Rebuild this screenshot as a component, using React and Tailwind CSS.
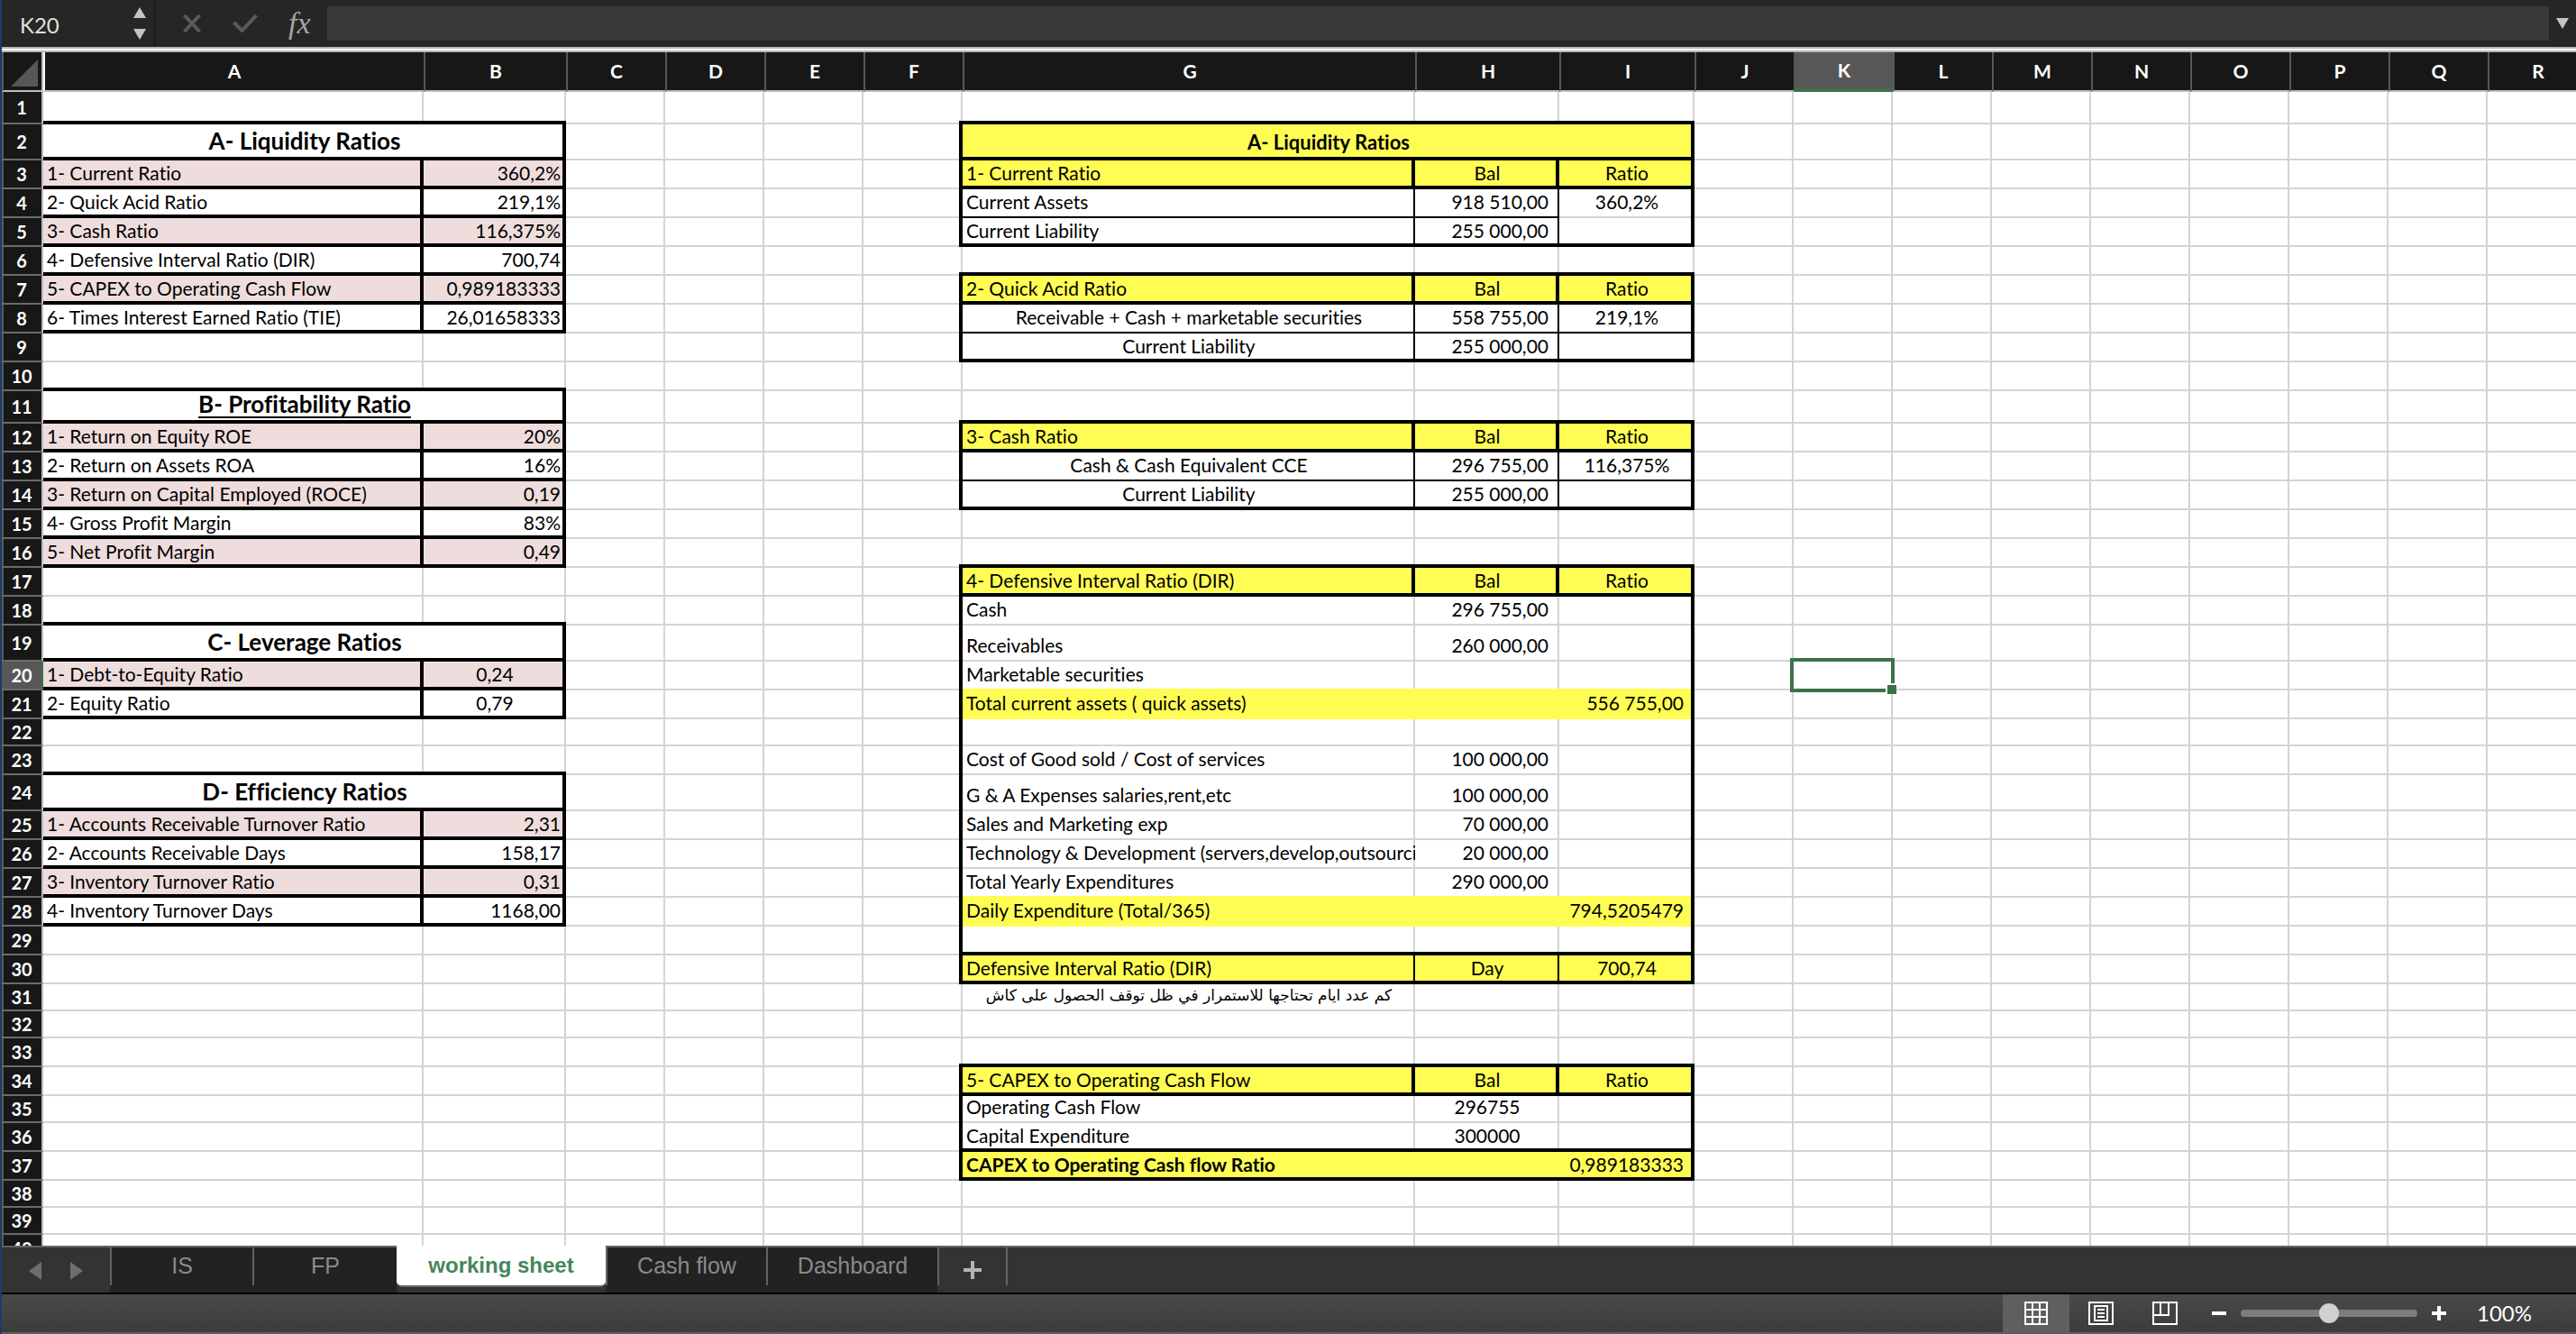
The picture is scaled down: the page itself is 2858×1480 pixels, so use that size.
import React, { useState } from "react";
import clsx from "clsx";

const columns = [
  { id: "A", width: "w-[422px]" },
  { id: "B", width: "w-[158px]" },
  { id: "C", width: "w-[110px]" },
  { id: "D", width: "w-[110px]" },
  { id: "E", width: "w-[110px]" },
  { id: "F", width: "w-[110px]" },
  { id: "G", width: "w-[502px]" },
  { id: "H", width: "w-[160px]" },
  { id: "I", width: "w-[150px]" },
  { id: "J", width: "w-[110px]" },
  { id: "K", width: "w-[110px]" },
  { id: "L", width: "w-[110px]" },
  { id: "M", width: "w-[110px]" },
  { id: "N", width: "w-[110px]" },
  { id: "O", width: "w-[110px]" },
  { id: "P", width: "w-[110px]" },
  { id: "Q", width: "w-[110px]" },
  { id: "R", width: "w-auto" },
];

// cell text, row by row
const cells = {
  A2: "A- Liquidity Ratios",
  A3: "1- Current Ratio",
  B3: "360,2%",
  A4: "2- Quick Acid Ratio",
  B4: "219,1%",
  A5: "3- Cash Ratio",
  B5: "116,375%",
  A6: "4- Defensive Interval Ratio (DIR)",
  B6: "700,74",
  A7: "5- CAPEX to Operating Cash Flow",
  B7: "0,989183333",
  A8: "6- Times Interest Earned Ratio (TIE)",
  B8: "26,01658333",
  A11: "B- Profitability Ratio",
  A12: "1- Return on Equity ROE",
  B12: "20%",
  A13: "2- Return on Assets ROA",
  B13: "16%",
  A14: "3- Return on Capital Employed (ROCE)",
  B14: "0,19",
  A15: "4- Gross Profit Margin",
  B15: "83%",
  A16: "5- Net Profit Margin",
  B16: "0,49",
  A19: "C- Leverage Ratios",
  A20: "1- Debt-to-Equity Ratio",
  B20: "0,24",
  A21: "2- Equity Ratio",
  B21: "0,79",
  A24: "D- Efficiency Ratios",
  A25: "1- Accounts Receivable Turnover Ratio",
  B25: "2,31",
  A26: "2- Accounts Receivable Days",
  B26: "158,17",
  A27: "3- Inventory Turnover Ratio",
  B27: "0,31",
  A28: "4- Inventory Turnover Days",
  B28: "1168,00",

  G2: "A- Liquidity Ratios",
  G3: "1- Current Ratio",
  H3: "Bal",
  I3: "Ratio",
  G4: "Current Assets",
  H4: "918 510,00",
  I4: "360,2%",
  G5: "Current Liability",
  H5: "255 000,00",
  G7: "2- Quick Acid Ratio",
  H7: "Bal",
  I7: "Ratio",
  G8: "Receivable + Cash + marketable securities",
  H8: "558 755,00",
  I8: "219,1%",
  G9: "Current Liability",
  H9: "255 000,00",
  G12: "3- Cash Ratio",
  H12: "Bal",
  I12: "Ratio",
  G13: "Cash & Cash Equivalent CCE",
  H13: "296 755,00",
  I13: "116,375%",
  G14: "Current Liability",
  H14: "255 000,00",
  G17: "4- Defensive Interval Ratio (DIR)",
  H17: "Bal",
  I17: "Ratio",
  G18: "Cash",
  H18: "296 755,00",
  G19: "Receivables",
  H19: "260 000,00",
  G20: "Marketable securities",
  G21: "Total current assets ( quick assets)",
  I21: "556 755,00",
  G23: "Cost of Good sold / Cost of services",
  H23: "100 000,00",
  G24: "G & A Expenses salaries,rent,etc",
  H24: "100 000,00",
  G25: "Sales and Marketing exp",
  H25: "70 000,00",
  G26: "Technology & Development (servers,develop,outsourcing)",
  H26: "20 000,00",
  G27: "Total Yearly Expenditures",
  H27: "290 000,00",
  G28: "Daily Expenditure (Total/365)",
  I28: "794,5205479",
  G30: "Defensive Interval Ratio (DIR)",
  H30: "Day",
  I30: "700,74",
  G31: "كم عدد ايام تحتاجها للاستمرار في ظل توقف الحصول على كاش",
  G34: "5- CAPEX to Operating Cash Flow",
  H34: "Bal",
  I34: "Ratio",
  G35: "Operating Cash Flow",
  H35: "296755",
  G36: "Capital Expenditure",
  H36: "300000",
  G37: "CAPEX to Operating Cash flow Ratio",
  I37: "0,989183333",
};

const rowNumbers = Array.from({ length: 40 }, (_, i) => i + 1);
const shortRows = [22, 31, 32, 35, 38, 39];
const pinkRows = [3, 5, 7, 12, 14, 16, 20, 25, 27];
const yellowRows = [2, 3, 7, 12, 17, 21, 28, 30, 34, 37];
const sectionRows = [3, 7, 12, 17, 34];
const titleRows = [2, 11, 19, 24];
// rows right above a boxed block in column G
const cornerRows = [1, 6, 11, 16, 33];

// key is right edge + bottom edge: g grid, t thin, k thick, y yellow, n none
const edges = {
  gg: "shadow-[inset_-2px_0_#d4d4d4,inset_0_-2px_#d4d4d4]",
  gk: "shadow-[inset_0_-4px_#000,inset_-2px_0_#d4d4d4]",
  gy: "shadow-[inset_0_-2px_#fffd54,inset_-2px_0_#d4d4d4]",
  kg: "shadow-[inset_-4px_0_#000,inset_0_-2px_#d4d4d4]",
  ky: "shadow-[inset_-4px_0_#000,inset_0_-2px_#fffd54]",
  kt: "shadow-[inset_-4px_0_#000,inset_0_-2px_#000]",
  kk: "shadow-[inset_-4px_0_#000,inset_0_-4px_#000]",
  kn: "shadow-[inset_-4px_0_#000]",
  tg: "shadow-[inset_-2px_0_#000,inset_0_-2px_#d4d4d4]",
  tt: "shadow-[inset_-2px_0_#000,inset_0_-2px_#000]",
  tk: "shadow-[inset_-2px_0_#000,inset_0_-4px_#000]",
  nk: "shadow-[inset_0_-4px_#000]",
  nn: "",
};

const between = (n, ranges) => ranges.some(([a, b]) => n >= a && n <= b);
const inLeftTable = (row) => between(row, [[2, 8], [11, 16], [19, 21], [24, 28]]);
const inRightTable = (row) =>
  between(row, [[2, 5], [7, 9], [12, 14], [17, 30], [34, 37]]);

function rightEdge(col, row) {
  if ("AB".includes(col)) return inLeftTable(row) ? "k" : "g";
  if ("FI".includes(col)) return inRightTable(row) ? "k" : "g";
  if ("GH".includes(col)) {
    if (row === 2 || sectionRows.includes(row)) return "k";
    if ([4, 5, 8, 9, 13, 14, 30].includes(row)) return "t";
    if ([21, 28, 37].includes(row)) return "n";
  }
  return "g";
}

function bottomEdge(col, row) {
  if ("AB".includes(col)) {
    return inLeftTable(row) || [1, 10, 18, 23].includes(row) ? "k" : "g";
  }
  if ("GHI".includes(col)) {
    if (
      [1, 2, 3, 5, 6, 7, 9, 11, 12, 14, 16, 17, 29, 30, 33, 34, 36, 37].includes(row)
    )
      return "k";
    if ([8, 13].includes(row) || (row === 4 && col !== "I")) return "t";
    if ([20, 27].includes(row)) return "y";
    if ([21, 28].includes(row)) return "n";
  }
  return "g";
}

function cellAlign(col, row) {
  if (col === "A") return titleRows.includes(row) ? "text-center" : "pl-1";
  if (col === "B") return [20, 21].includes(row) ? "text-center" : "pr-1.5 text-right";
  if (col === "G")
    return [2, 8, 9, 13, 14, 31].includes(row) ? "text-center" : "pl-1";
  if (col === "H")
    return sectionRows.includes(row) || [30, 35, 36].includes(row)
      ? "text-center"
      : "pr-3 text-right";
  if (col === "I") return [21, 28, 37].includes(row) ? "pr-3 text-right" : "text-center";
  return "";
}

function rowHeight(row) {
  if ([2, 19, 24].includes(row)) return "h-10";
  if ([1, 11].includes(row)) return "h-9";
  if (shortRows.includes(row)) return "h-[30px]";
  return "h-8";
}

const Cell = ({ col, row }) => {
  const leftTitle = col === "A" && titleRows.includes(row);
  const rightTitle = col === "G" && row === 2;
  const arabic = col === "G" && row === 31;
  const selected = col === "K" && row === 20;
  const corner = col === "F" && cornerRows.includes(row);

  return (
    <td
      colSpan={leftTitle ? 2 : rightTitle ? 3 : undefined}
      dir={arabic ? "rtl" : undefined}
      className={clsx(
        "align-bottom whitespace-nowrap",
        selected || corner ? "relative" : "overflow-hidden",
        leftTitle || rightTitle ? "pb-2.5" : "pb-2",
        leftTitle ? "text-[26px] leading-6 font-bold" : "leading-5",
        rightTitle && "text-[22px] font-bold",
        col === "G" && row === 37 && "font-bold",
        col === "A" && row === 11 && "underline underline-offset-4",
        arabic && "font-['DejaVu_Sans',sans-serif] text-[17px]",
        cellAlign(col, row),
        "AB".includes(col) && pinkRows.includes(row) && "bg-[#eedddc]",
        "GHI".includes(col) && yellowRows.includes(row) && "bg-[#fffd54]",
        edges[rightEdge(col, row) + bottomEdge(col, row)]
      )}
    >
      {cells[col + row]}
      {corner && <span className="absolute right-0 bottom-0 h-1 w-1 bg-black"></span>}
      {selected && (
        <div className="absolute -top-1 -left-1 -right-0.5 -bottom-0.5 border-4 border-[#3c724a]">
          <span className="absolute -right-1.5 -bottom-1.5 h-3 w-3 border-t-2 border-l-2 border-white bg-[#3c724a]"></span>
        </div>
      )}
    </td>
  );
};

const Sheet = () => {
  return (
    <table className="w-[calc(100%+12px)] table-fixed border-separate border-spacing-0 bg-white text-[21px] text-black">
      <colgroup>
        <col className="w-[46px]" />
        {columns.map((c) => (
          <col key={c.id} className={c.width} />
        ))}
      </colgroup>
      <thead>
        <tr className="h-11 bg-[#171717] text-white">
          <td className="border-r-2 border-b-2 border-l-2 border-[#bdbdbd] border-l-[#55585c] p-0">
            <svg viewBox="0 0 42 42" className="h-[42px] w-[42px]">
              <path d="M8 38 L38 8 V38 Z" fill="#575757" />
            </svg>
          </td>
          {columns.map((c) => (
            <th
              key={c.id}
              scope="col"
              className={clsx(
                "border-l-2 p-0 font-bold",
                c.id === "K"
                  ? "border-b-4 border-b-[#3c724a] bg-[#575757]"
                  : "border-b-2 border-b-[#bdbdbd]",
                c.id === "A" ? "border-l-white" : "border-l-[#575757]"
              )}
            >
              {c.id}
            </th>
          ))}
        </tr>
      </thead>
      <tbody>
        {rowNumbers.map((row) => (
          <tr key={row} className={rowHeight(row)}>
            <th
              scope="row"
              className={clsx(
                "border-r-2 border-b-2 border-b-[#6a6a6a] p-0 text-[20px] leading-5 font-bold text-white shadow-[inset_2px_0_#55585c]",
                row === 20
                  ? "border-r-[#3c724a] bg-[#575757]"
                  : "border-r-[#bdbdbd] bg-[#171717]"
              )}
            >
              {row}
            </th>
            {columns
              .filter((c) => !(c.id === "B" && titleRows.includes(row)))
              .filter((c) => !(row === 2 && "HI".includes(c.id)))
              .map((c) => (
                <Cell key={c.id} col={c.id} row={row} />
              ))}
          </tr>
        ))}
      </tbody>
    </table>
  );
};

const FormulaBar = () => {
  const [formula, setFormula] = useState("");
  return (
    <div className="flex h-[52px] shrink-0 items-center bg-[#262626]">
      <div className="flex h-full w-[172px] items-center justify-between border-r-4 border-[#1f1f1f] pr-2 pl-5">
        <input
          aria-label="Name box"
          defaultValue="K20"
          className="w-[100px] bg-transparent pt-1 text-[24px] text-[#e0e0e0] outline-none"
        />
        <button aria-label="Choose cell" className="text-[#c4c4c4]">
          <svg viewBox="0 0 14 38" className="h-[38px] w-[14px]" fill="currentColor">
            <path d="M7 1 L14 13 H0 Z M0 25 H14 L7 37 Z" />
          </svg>
        </button>
      </div>
      <button aria-label="Cancel" className="ml-[29px] text-[#5a5a5a]">
        <svg viewBox="0 0 20 20" className="h-5 w-5" fill="none" stroke="currentColor" strokeWidth="4">
          <path d="M1.5 1 L18.5 19 M18.5 1 L1.5 19" />
        </svg>
      </button>
      <button aria-label="Enter" className="ml-[35px] text-[#5a5a5a]">
        <svg viewBox="0 0 28 20" className="h-5 w-7" fill="none" stroke="currentColor" strokeWidth="4">
          <path d="M1.5 9 L10.5 18 L26.5 1" />
        </svg>
      </button>
      <button
        aria-label="Insert function"
        className="ml-[34px] w-[43px] text-left font-['Liberation_Serif',serif] text-[34px] leading-9 text-[#a5a5a5] italic"
      >
        fx
      </button>
      <input
        aria-label="Formula"
        value={formula}
        onChange={(e) => setFormula(e.target.value)}
        className="h-[38px] min-w-0 flex-1 bg-[#383838] px-2 text-[21px] text-white outline-none"
      />
      <button aria-label="Expand formula bar" className="flex w-[30px] justify-center text-[#c4c4c4]">
        <svg viewBox="0 0 14 12" className="h-3 w-[14px]" fill="currentColor">
          <path d="M0 0 H14 L7 12 Z" />
        </svg>
      </button>
    </div>
  );
};

const tabs = [
  { name: "IS", width: "w-[158px]" },
  { name: "FP", width: "w-[160px]" },
  { name: "working sheet", width: "w-[232px]" },
  { name: "Cash flow", width: "w-[178px]" },
  { name: "Dashboard", width: "w-[190px]" },
];

const SheetTabs = () => {
  const [active, setActive] = useState("working sheet");
  return (
    <div className="flex h-[52px] shrink-0 bg-[#333333] font-['Liberation_Sans',Arial,sans-serif]">
      <div className="flex w-[120px] items-center gap-8 border-t-2 border-[#636363] pt-0.5 pl-[30px] text-[#6e6e6e]">
        <button aria-label="Previous sheet">
          <svg viewBox="0 0 14 20" className="h-5 w-[14px]" fill="currentColor">
            <path d="M14 0 V20 L0 10 Z" />
          </svg>
        </button>
        <button aria-label="Next sheet">
          <svg viewBox="0 0 14 20" className="h-5 w-[14px]" fill="currentColor">
            <path d="M0 0 V20 L14 10 Z" />
          </svg>
        </button>
      </div>
      {tabs.map((tab) => (
        <div
          key={tab.name}
          className={clsx(
            tab.width,
            active === tab.name ? "bg-[#333333]" : "border-t-2 border-[#636363] bg-[#222222]"
          )}
        >
          <button
            onClick={() => setActive(tab.name)}
            className={clsx(
              "w-full",
              active === tab.name
                ? "h-[46px] rounded-b-md border-b-2 border-[#636363] bg-white text-[24px] font-bold text-[#46855a]"
                : "h-[42px] border-l-2 border-[#636363] text-[25px] text-[#8a8a8a]"
            )}
          >
            {tab.name}
          </button>
        </div>
      ))}
      <div className="flex-1 border-t-2 border-[#636363]">
        <button
          aria-label="Add sheet"
          className="flex h-[42px] w-[78px] items-center justify-center border-x-2 border-[#636363] pt-2 text-[#b4b4b4]"
        >
          <svg viewBox="0 0 20 20" className="h-5 w-5" stroke="currentColor" strokeWidth="4">
            <path d="M10 0 V20 M0 10 H20" />
          </svg>
        </button>
      </div>
    </div>
  );
};

const StatusBar = () => {
  const [zoom, setZoom] = useState(100);
  return (
    <div className="flex h-[46px] shrink-0 items-center justify-end border-t-2 border-b-2 border-t-black border-b-[#5e5e5e] bg-gradient-to-b from-[#4a4a4a] to-[#3b3b3b] text-white">
      <button aria-label="Normal view" className="flex h-full w-[74px] items-center justify-center bg-[#5f5f5f]">
        <svg viewBox="0 0 26 26" className="h-[26px] w-[26px]" fill="none" stroke="currentColor" strokeWidth="2">
          <path d="M1 1 H25 V25 H1 Z M9 1 V25 M17 1 V25 M1 9 H25 M1 17 H25" />
        </svg>
      </button>
      <button aria-label="Page layout" className="ml-[21px]">
        <svg viewBox="0 0 28 26" className="h-[26px] w-7" fill="none" stroke="currentColor" strokeWidth="2">
          <path d="M1 1 H27 V25 H1 Z M7 5 H21 V21 H7 Z M10 9 H18 M10 13 H18 M10 17 H18" />
        </svg>
      </button>
      <button aria-label="Page break preview" className="ml-[43px]">
        <svg viewBox="0 0 28 26" className="h-[26px] w-7" fill="none" stroke="currentColor" strokeWidth="2">
          <path d="M1 1 H27 V25 H1 Z M9 1 V15 M18 1 V15 M1 15 H19" />
        </svg>
      </button>
      <button aria-label="Zoom out" onClick={() => setZoom(Math.max(zoom - 10, 10))} className="ml-[38px]">
        <svg viewBox="0 0 16 16" className="h-4 w-4" stroke="currentColor" strokeWidth="4">
          <path d="M0 8 H16" />
        </svg>
      </button>
      <input
        type="range"
        aria-label="Zoom"
        min="10"
        max="190"
        value={zoom}
        onChange={(e) => setZoom(Number(e.target.value))}
        className="mx-4 h-2 w-[196px] appearance-none rounded-full bg-[#7d7d7d] [&::-webkit-slider-thumb]:h-[22px] [&::-webkit-slider-thumb]:w-[22px] [&::-webkit-slider-thumb]:appearance-none [&::-webkit-slider-thumb]:rounded-full [&::-webkit-slider-thumb]:bg-[#d0d0d0]"
      />
      <button aria-label="Zoom in" onClick={() => setZoom(Math.min(zoom + 10, 190))}>
        <svg viewBox="0 0 16 16" className="h-4 w-4" stroke="currentColor" strokeWidth="4">
          <path d="M0 8 H16 M8 0 V16" />
        </svg>
      </button>
      <span className="w-[144px] pl-[34px] text-[24px] leading-7">{zoom}%</span>
    </div>
  );
};

const App = () => {
  return (
    <div className="flex h-screen flex-col border-l-2 border-[#1c3c66] bg-[#262626] font-[Lato,sans-serif] [font-variant-ligatures:none]">
      <FormulaBar />
      <div className="h-1.5 shrink-0 border-t-2 border-b-2 border-[#b5b5b5] bg-white"></div>
      <div className="min-h-0 flex-1 overflow-hidden">
        <Sheet />
      </div>
      <SheetTabs />
      <StatusBar />
    </div>
  );
};

export default App;
